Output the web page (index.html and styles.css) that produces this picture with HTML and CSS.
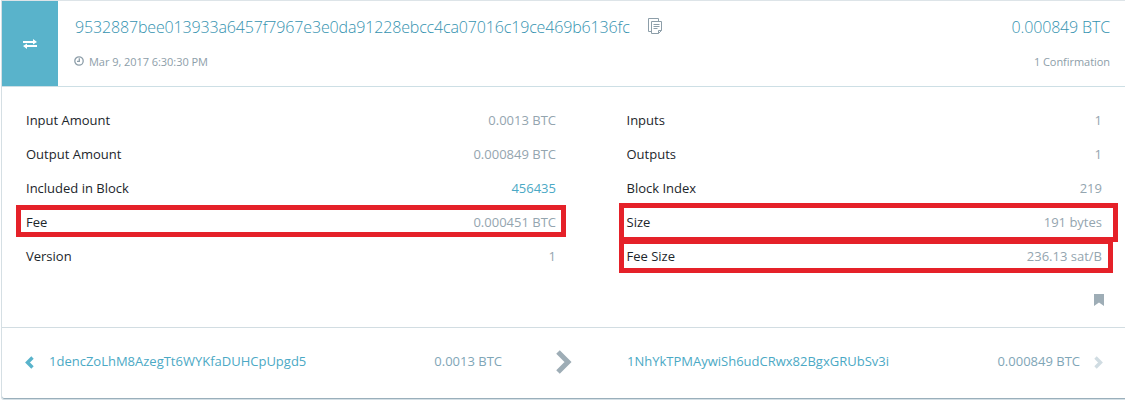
FILE: index.html
```html
<!DOCTYPE html>
<html lang="en">
<head>
<meta charset="utf-8">
<title>Transaction</title>
<link rel="stylesheet" href="styles.css">
</head>
<body>
<article class="card">
  <header class="head">
    <div class="badge">
      <svg width="14" height="10" viewBox="0 0 14 10" fill="#fff"><path d="M0 2h10V0l4 3-4 2.500V4H0zM14 6H4V4.500L0 7l4 3V8h10z"/></svg>
    </div>
    <div class="head-main">
      <div class="head-line">
        <span class="hash">9532887bee013933a6457f7967e3e0da91228ebcc4ca07016c19ce469b6136fc</span>
        <svg class="copy" width="14" height="16" viewBox="0 0 14 16" fill="none" stroke="#8d9ea9"><path d="M3.500 13.500h-3V.5h10v3M10.500 15.500h-7v-12h10v9zM13.500 12.500h-3v3M5.500 6.500h6M5.500 8.500h6M5.500 10.500h4"/></svg>
        <span class="total">0.000849 BTC</span>
      </div>
      <div class="head-line small">
        <svg class="clock" width="10" height="10" viewBox="0 0 10 10" fill="none" stroke="#8d9ea9" stroke-width="1.300"><circle cx="5" cy="5" r="4.200"/><path d="M5.300 2.200v3.200H3"/></svg>
        <span class="date">Mar 9, 2017 6:30:30 PM</span>
        <span class="confirm">1 Confirmation</span>
      </div>
    </div>
  </header>
  <section class="details">
    <dl class="col">
      <div class="row"><dt>Input Amount</dt><dd>0.0013 BTC</dd></div>
      <div class="row"><dt>Output Amount</dt><dd>0.000849 BTC</dd></div>
      <div class="row"><dt>Included in Block</dt><dd class="link">456435</dd></div>
      <div class="row"><dt>Fee</dt><dd>0.000451 BTC</dd><i class="mark mark-fee"></i></div>
      <div class="row"><dt>Version</dt><dd>1</dd></div>
    </dl>
    <dl class="col">
      <div class="row"><dt>Inputs</dt><dd>1</dd></div>
      <div class="row"><dt>Outputs</dt><dd>1</dd></div>
      <div class="row"><dt>Block Index</dt><dd>219</dd></div>
      <div class="row"><dt>Size</dt><dd>191 bytes</dd><i class="mark mark-size"></i></div>
      <div class="row"><dt>Fee Size</dt><dd>236.13 sat/B</dd><i class="mark mark-rate"></i></div>
    </dl>
    <svg class="bookmark" width="10" height="12" viewBox="0 0 10 12" fill="#9eadb6"><path d="M0 0h10v12L5 8.500 0 12z"/></svg>
  </section>
  <footer class="flow">
    <svg class="prev" width="9" height="13" viewBox="0 0 9 13" fill="none" stroke="#59b3cb" stroke-width="3.400"><path d="M7.500 1.500l-5 5 5 5"/></svg>
    <span class="addr">1dencZoLhM8AzegTt6WYKfaDUHCpUpgd5</span>
    <span class="amount">0.0013 BTC</span>
    <svg class="arrow" width="16" height="24" viewBox="0 0 16 24" fill="none" stroke="#9eadb6" stroke-width="5"><path d="M2 2l10 10L2 22"/></svg>
    <span class="addr">1NhYkTPMAywiSh6udCRwx82BgxGRUbSv3i</span>
    <span class="amount">0.000849 BTC</span>
    <svg class="next" width="9" height="13" viewBox="0 0 9 13" fill="none" stroke="#d0dce2" stroke-width="3.400"><path d="M1.500 1.500l5 5-5 5"/></svg>
  </footer>
</article>
</body>
</html>
```

FILE: styles.css
```css
* { box-sizing: border-box; }
body {
  margin: 0;
  background: #fff;
  font-family: "Open Sans", sans-serif;
  font-size: 13px;
  color: #1c262b;
}
svg { display: block; flex: none; }
span, dt, dd { white-space: nowrap; }
.card {
  height: 400px;
  margin-left: 1px;
  border-left: 1px solid #d5dfe4;
  border-top: 1px solid #dde4e8;
  border-bottom: 1px solid #d5e0e6;
  border-bottom-left-radius: 3px;
  box-shadow: inset 0 -1px #9aafbb;
}
.head {
  display: flex;
  height: 86px;
  border-bottom: 1px solid #cddfe5;
}
.badge {
  display: flex;
  align-items: center;
  justify-content: center;
  width: 56px;
  padding-top: 1px;
  background: #59b3cb;
}
.head-main { flex: 1; padding: 12px 15px 0 17px; }
.head-line { display: flex; align-items: center; height: 26px; }
.hash, .total {
  padding-top: 1px;
  font-size: 16px;
  font-weight: 300;
  letter-spacing: -0.15px;
  color: #3593b0;
}
.copy { margin-left: 18px; }
.total, .confirm { margin-left: auto; }
.small { margin: 9px 0 0 -1px; font-size: 11px; letter-spacing: -0.05px; color: #8d9ea9; }
.date { margin-left: 5px; }
.details {
  display: grid;
  grid-template-columns: 530px 475.5px;
  column-gap: 70.5px;
  align-content: start;
  height: 241px;
  padding: 16px 0 0 24px;
  border-bottom: 1px solid #d2dde2;
}
.col { margin: 0; }
.row {
  position: relative;
  display: flex;
  align-items: center;
  justify-content: space-between;
  height: 34px;
}
dd { margin: 0; color: #94a5af; }
dd.link { color: #4ba9c5; }
.mark { position: absolute; border: 5px solid #e52129; }
.mark-fee { inset: 0 -10px 2px; }
.mark-size { inset: -2px -16px -3px -7.5px; }
.mark-rate { inset: 0 -11px 0 -7.5px; }
.bookmark { grid-column: 2; justify-self: end; margin: 21px -2px 0 0; }
.flow {
  display: grid;
  grid-template-columns: 24px 360px 93px 125px 262px 191px 23px;
  align-items: center;
  height: 68px;
  padding-left: 23px;
}
.flow .addr { padding-bottom: 2px; color: #4ba9c5; }
.flow .amount { padding-bottom: 2px; color: #7fa6b7; text-align: right; }
.flow .arrow, .flow .next { justify-self: end; }
.flow .arrow { margin-right: 55px; }
```
